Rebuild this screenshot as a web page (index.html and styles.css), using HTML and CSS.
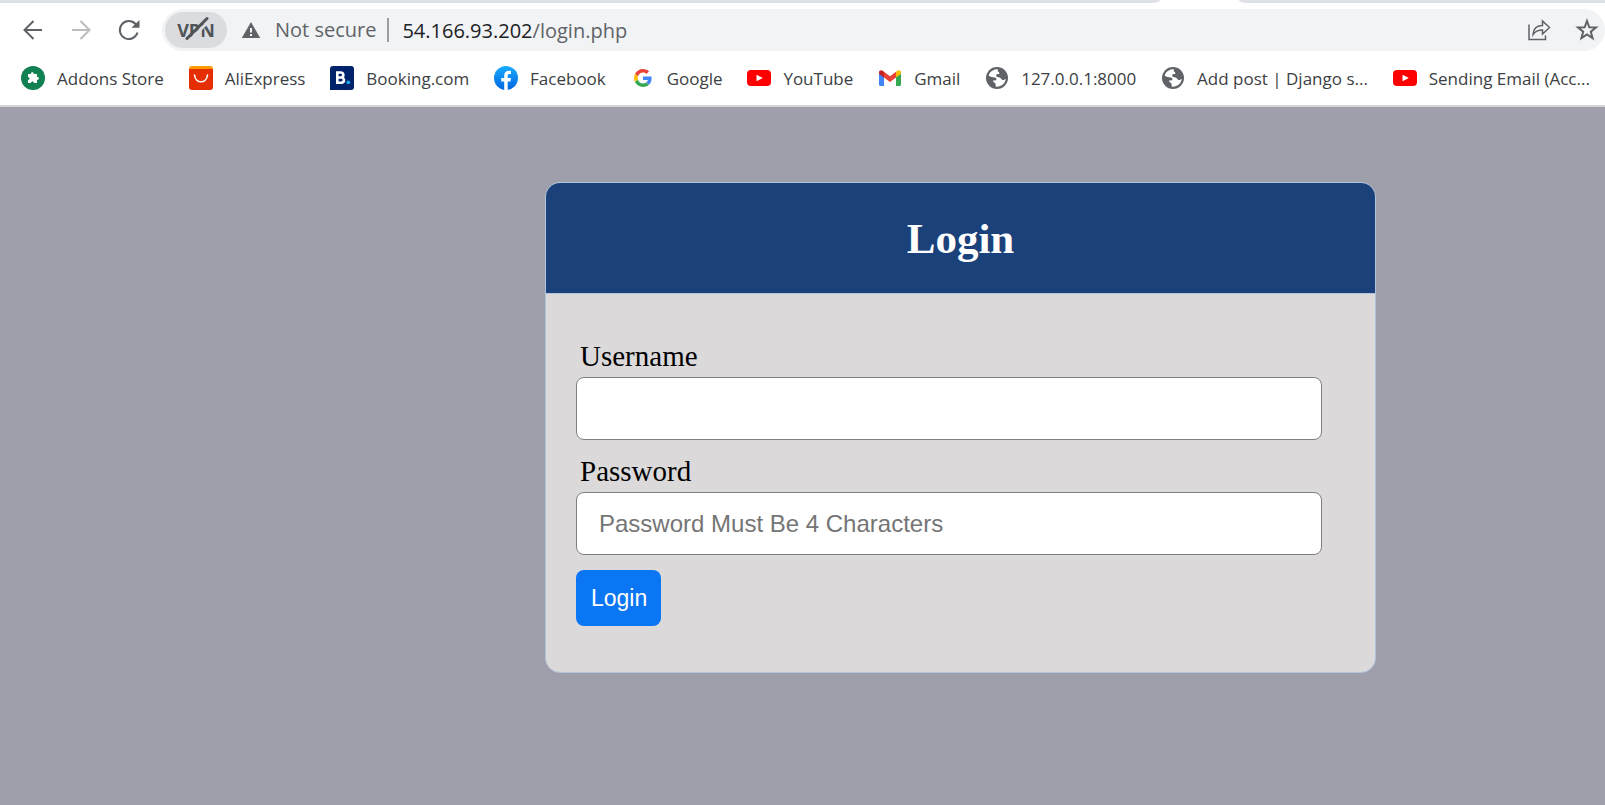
FILE: index.html
```html
<!DOCTYPE html>
<html lang="en">
<head>
<meta charset="utf-8">
<title>Login</title>
<link rel="stylesheet" href="styles.css">
</head>
<body>
<svg class="defs" aria-hidden="true">
  <symbol id="globe" viewBox="0 0 24 24">
    <circle cx="12" cy="12" r="11" fill="#5f6368"/>
    <path fill="#fff" d="M13 3.400C9 3 5 5.500 3.700 9.500C5.500 11 7.500 11.300 10 11.400C11.500 11.600 11.600 13.200 11.200 14.300L8 14.400C8 16 9.500 16.500 10.300 17.200C10.700 18.500 10.500 19.500 11 20.700C16 21.200 20.500 17.500 20.700 12.500C19.500 14 18 14.500 16.800 13.400C15.500 11.500 14 11 12 10.900C10.700 10 11 8.300 12.500 8.100L14.300 8C14.700 6.800 14 5.700 12.600 5.200Z"/>
  </symbol>
  <symbol id="youtube" viewBox="0 0 24 24">
    <rect y="4" width="24" height="16" rx="4" fill="#f00"/>
    <path fill="#fff" d="M9.500 8.700L15.800 12L9.500 15.300Z"/>
  </symbol>
</svg>
<header class="browser">
  <div class="tabstrip"><span class="tab-left"></span><span class="tab-right"></span></div>
  <div class="toolbar">
    <button class="nav" aria-label="Back"><svg viewBox="0 0 24 24"><path d="M21 12H4M12.500 3L3.500 12L12.500 21"/></svg></button>
    <button class="nav nav-off" aria-label="Forward"><svg viewBox="0 0 24 24"><path d="M3 12H20M11.500 3L20.500 12L11.500 21"/></svg></button>
    <button class="nav" aria-label="Reload"><svg viewBox="0 0 24 24"><path d="M20.500 14.500A9 9 0 1 1 18.500 6L20 7.500"/><path class="solid" d="M22.500 2V9.800H14.500Z"/></svg></button>
    <div class="omnibox">
      <button class="vpn" aria-label="VPN off">VPN<svg viewBox="0 0 30 24"><path class="gap" d="M8 24L28 4"/><path d="M5 22.500L25 2.500"/></svg></button>
      <svg class="warn" viewBox="0 0 20 18"><path fill="#5f6368" d="M10 1L19.200 17H0.800Z"/><path fill="#f1f3f4" d="M9 7H11V11.500H9ZM9 13H11V15H9Z"/></svg>
      <span class="secure">Not secure</span>
      <span class="url"><b>54.166.93.202</b>/login.php</span>
      <button class="action" aria-label="Share"><svg viewBox="0 0 24 24"><path d="M2 6.500V21.500H18.500V17.500M6 16.500C6.500 10.500 9.500 7.500 15.500 7.500V3L22.500 9.500L15.500 16V12C11.500 12 8.500 13 6 16.500Z"/></svg></button>
      <button class="action" aria-label="Bookmark"><svg viewBox="0 0 24 24"><path class="star" d="M12 3L14.300 9.300L21 9.500L15.800 13.700L17.600 20.200L12 16.400L6.400 20.200L8.200 13.700L3 9.500L9.700 9.300Z"/></svg></button>
    </div>
  </div>
  <nav class="bookmarks">
    <a href="#"><svg viewBox="0 0 24 24"><circle cx="12" cy="12" r="12" fill="#128151"/><path fill="#fff" d="M7 8H10C9.500 5.500 13 5.500 12.800 8H16V11C18.500 10.500 18.500 14 16 13.800V17H13C13 15 10 15 10 17H7V14C9 14 9 11 7 11Z"/></svg>Addons Store</a>
    <a href="#"><svg viewBox="0 0 24 24"><rect width="24" height="20" rx="3" fill="#ff9900"/><path fill="#e62e04" d="M0 3H24V21A3 3 0 0 1 21 24H3A3 3 0 0 1 0 21Z"/><path fill="none" stroke="#fff" stroke-width="1.600" stroke-linecap="round" d="M5.500 9C6.500 18 17.500 18 18.500 9"/></svg>AliExpress</a>
    <a href="#"><svg viewBox="0 0 24 24"><path fill="#00226b" d="M3 0H21A3 3 0 0 1 24 3V21A3 3 0 0 1 21 24H0V3A3 3 0 0 1 3 0Z"/><path fill="none" stroke="#fff" stroke-width="2.600" d="M7.300 6.500H10.500C14.300 6.500 14.300 11.500 10.500 11.500H7.300H11C15 11.500 15 16.700 11 16.700H7.300Z"/><circle cx="18.300" cy="16.300" r="1.900" fill="#1fa4e8"/></svg>Booking.com</a>
    <a href="#"><svg viewBox="0 0 24 24"><defs><linearGradient id="fb" x2="0" y2="1"><stop stop-color="#18acfe"/><stop offset="1" stop-color="#0165e1"/></linearGradient></defs><circle cx="12" cy="12" r="12" fill="url(#fb)"/><path fill="#fff" d="M10.200 24V15.500H7.200V12H10.200V9.500C10.200 6.200 12.200 4.700 14.800 4.700C16 4.700 17 4.900 17 4.900V7.900H15.400C14 7.900 13.700 8.700 13.700 9.700V12H17L16.400 15.500H13.700V24Z"/></svg>Facebook</a>
    <a href="#"><svg viewBox="-8 -8 64 64"><path fill="#ea4335" d="M24 9.500c3.540 0 6.710 1.220 9.210 3.600l6.850-6.850C35.900 2.380 30.470 0 24 0 14.620 0 6.510 5.380 2.560 13.220l7.980 6.190C12.430 13.720 17.740 9.500 24 9.500z"/><path fill="#4285f4" d="M46.980 24.550c0-1.570-.15-3.090-.38-4.550H24v9.020h12.940c-.58 2.960-2.260 5.480-4.780 7.180l7.730 6c4.510-4.180 7.090-10.360 7.090-17.650z"/><path fill="#fbbc05" d="M10.530 28.590c-.48-1.450-.76-2.990-.76-4.590s.27-3.140.76-4.590l-7.980-6.190C.92 16.460 0 20.120 0 24c0 3.880.92 7.540 2.560 10.780l7.970-6.190z"/><path fill="#34a853" d="M24 48c6.480 0 11.930-2.130 15.890-5.810l-7.730-6c-2.150 1.450-4.920 2.300-8.160 2.300-6.260 0-11.570-4.220-13.470-9.910l-7.980 6.190C6.510 42.620 14.620 48 24 48z"/></svg>Google</a>
    <a href="#"><svg><use href="#youtube"/></svg>YouTube</a>
    <a href="#"><svg viewBox="0 0 24 24"><path fill="#4285f4" d="M1 6L6 10V20H2.500A1.500 1.500 0 0 1 1 18.500Z"/><path fill="#34a853" d="M18 10L23 6V18.500A1.500 1.500 0 0 1 21.500 20H18Z"/><path fill="#ea4335" d="M6 5.800L12 10.300L18 5.800V11.500L12 16L6 11.500Z"/><path fill="#c5221f" d="M1 6.500C1 4 3.500 3.500 5 5L6 5.800V11.500L1 7.800Z"/><path fill="#fbbc04" d="M23 6.500C23 4 20.500 3.500 19 5L18 5.800V11.500L23 7.800Z"/></svg>Gmail</a>
    <a href="#"><svg><use href="#globe"/></svg>127.0.0.1:8000</a>
    <a href="#"><svg><use href="#globe"/></svg>Add post | Django s...</a>
    <a href="#"><svg><use href="#youtube"/></svg>Sending Email (Acc...</a>
  </nav>
</header>
<main class="page">
  <section class="card">
    <h1>Login</h1>
    <form class="form">
      <div class="field"><label for="user">Username</label><input id="user" type="text"></div>
      <div class="field"><label for="pass">Password</label><input id="pass" type="password" placeholder="Password Must Be 4 Characters"></div>
      <button class="submit" type="button">Login</button>
    </form>
  </section>
</main>
</body>
</html>
```
FILE: styles.css
```css
* { box-sizing: border-box; }
html, body { height: 100%; }
body {
  margin: 0;
  display: flex;
  flex-direction: column;
  overflow-x: hidden;
  background: #9f9fab;
  font-family: "Liberation Serif", "Times New Roman", serif;
}
button { margin: 0; padding: 0; border: 0; background: none; }
.defs { display: none; }

.browser {
  background: #fff;
  border-bottom: 2px solid #d5d5d7;
  font-family: "Open Sans", "Noto Sans", sans-serif;
}
.tabstrip {
  display: grid;
  grid-template-columns: 1160fr 366fr;
  gap: 79px;
  height: 3px;
}
.tab-left { background: #dee1e6; border-bottom-right-radius: 8px 3px; }
.tab-right { background: #dee1e6; border-bottom-left-radius: 8px 3px; }

.toolbar {
  display: flex;
  align-items: center;
  padding: 6px 0 0 21px;
}
.nav { width: 24px; height: 24px; margin-right: 24px; }
.nav svg, .action svg {
  display: block;
  width: 24px;
  height: 24px;
  fill: none;
  stroke: #5f6368;
  stroke-width: 2;
}
.action svg { stroke-width: 1.5; }
.action .star { stroke-width: 2; }
.nav .solid { fill: #5f6368; stroke: none; }
.nav-off svg { stroke: #babcbe; }
.omnibox {
  flex: 1;
  display: flex;
  align-items: center;
  height: 42px;
  margin-left: -3px;
  padding: 0 6px 0 3px;
  border-radius: 21px;
  background: #f1f3f4;
  font-size: 20px;
  color: #5f6368;
}
.vpn {
  position: relative;
  width: 62px;
  height: 36px;
  border-radius: 18px;
  background: #dadce0;
  color: #505357;
  font: bold 18px "Open Sans", sans-serif;
}
.vpn svg {
  position: absolute;
  left: 17px;
  top: 4px;
  width: 30px;
  height: 24px;
  fill: none;
  stroke: #505357;
  stroke-width: 3;
  stroke-linecap: round;
}
.vpn .gap { stroke: #dadce0; stroke-linecap: butt; }
.warn { width: 20px; height: 18px; margin: 0 14px; }
.secure {
  padding-right: 11px;
  border-right: 2px solid #9a9da1;
  line-height: 24px;
}
.url { flex: 1; padding-left: 13px; }
.url b { font-weight: normal; color: #202124; }
.action { margin-left: 24px; }

.bookmarks {
  display: flex;
  justify-content: space-between;
  align-items: center;
  height: 54px;
  padding: 0 15px 0 21px;
}
.bookmarks a {
  display: flex;
  align-items: center;
  gap: 12px;
  color: #3c4043;
  font-size: 17px;
  text-decoration: none;
  white-space: nowrap;
}
.bookmarks svg { width: 24px; height: 24px; }

.page {
  flex: 1;
  display: grid;
  grid-template-columns: 545fr 831fr 229fr;
  align-items: start;
  padding-top: 75px;
}
.card {
  grid-column: 2;
  overflow: hidden;
  border: 1px solid #b0c4de;
  border-radius: 15px;
  background: #dbd9da;
}
.card h1 {
  margin: 0;
  padding: 31px 0 29px;
  border-bottom: 1px solid #b0c4de;
  background: #1b417a;
  color: #fff;
  font-size: 43px;
  line-height: 50px;
  text-align: center;
}
.form { padding: 46px 30px; }
.field { margin-bottom: 15px; }
.field label {
  display: block;
  padding: 0 4px 4px;
  font-size: 29px;
  line-height: 33px;
}
.field input {
  display: block;
  width: 97%;
  height: 63px;
  padding: 0 22px;
  border: 1px solid #808080;
  border-radius: 8px;
  background: #fff;
  font: 24px "Liberation Sans", Arial, sans-serif;
}
.field input::placeholder { color: #757575; }
.submit {
  height: 56px;
  padding: 0 14px 0 15px;
  border-radius: 8px;
  background: #0a76f4;
  color: #fff;
  font: 23px "Liberation Sans", Arial, sans-serif;
}
```
